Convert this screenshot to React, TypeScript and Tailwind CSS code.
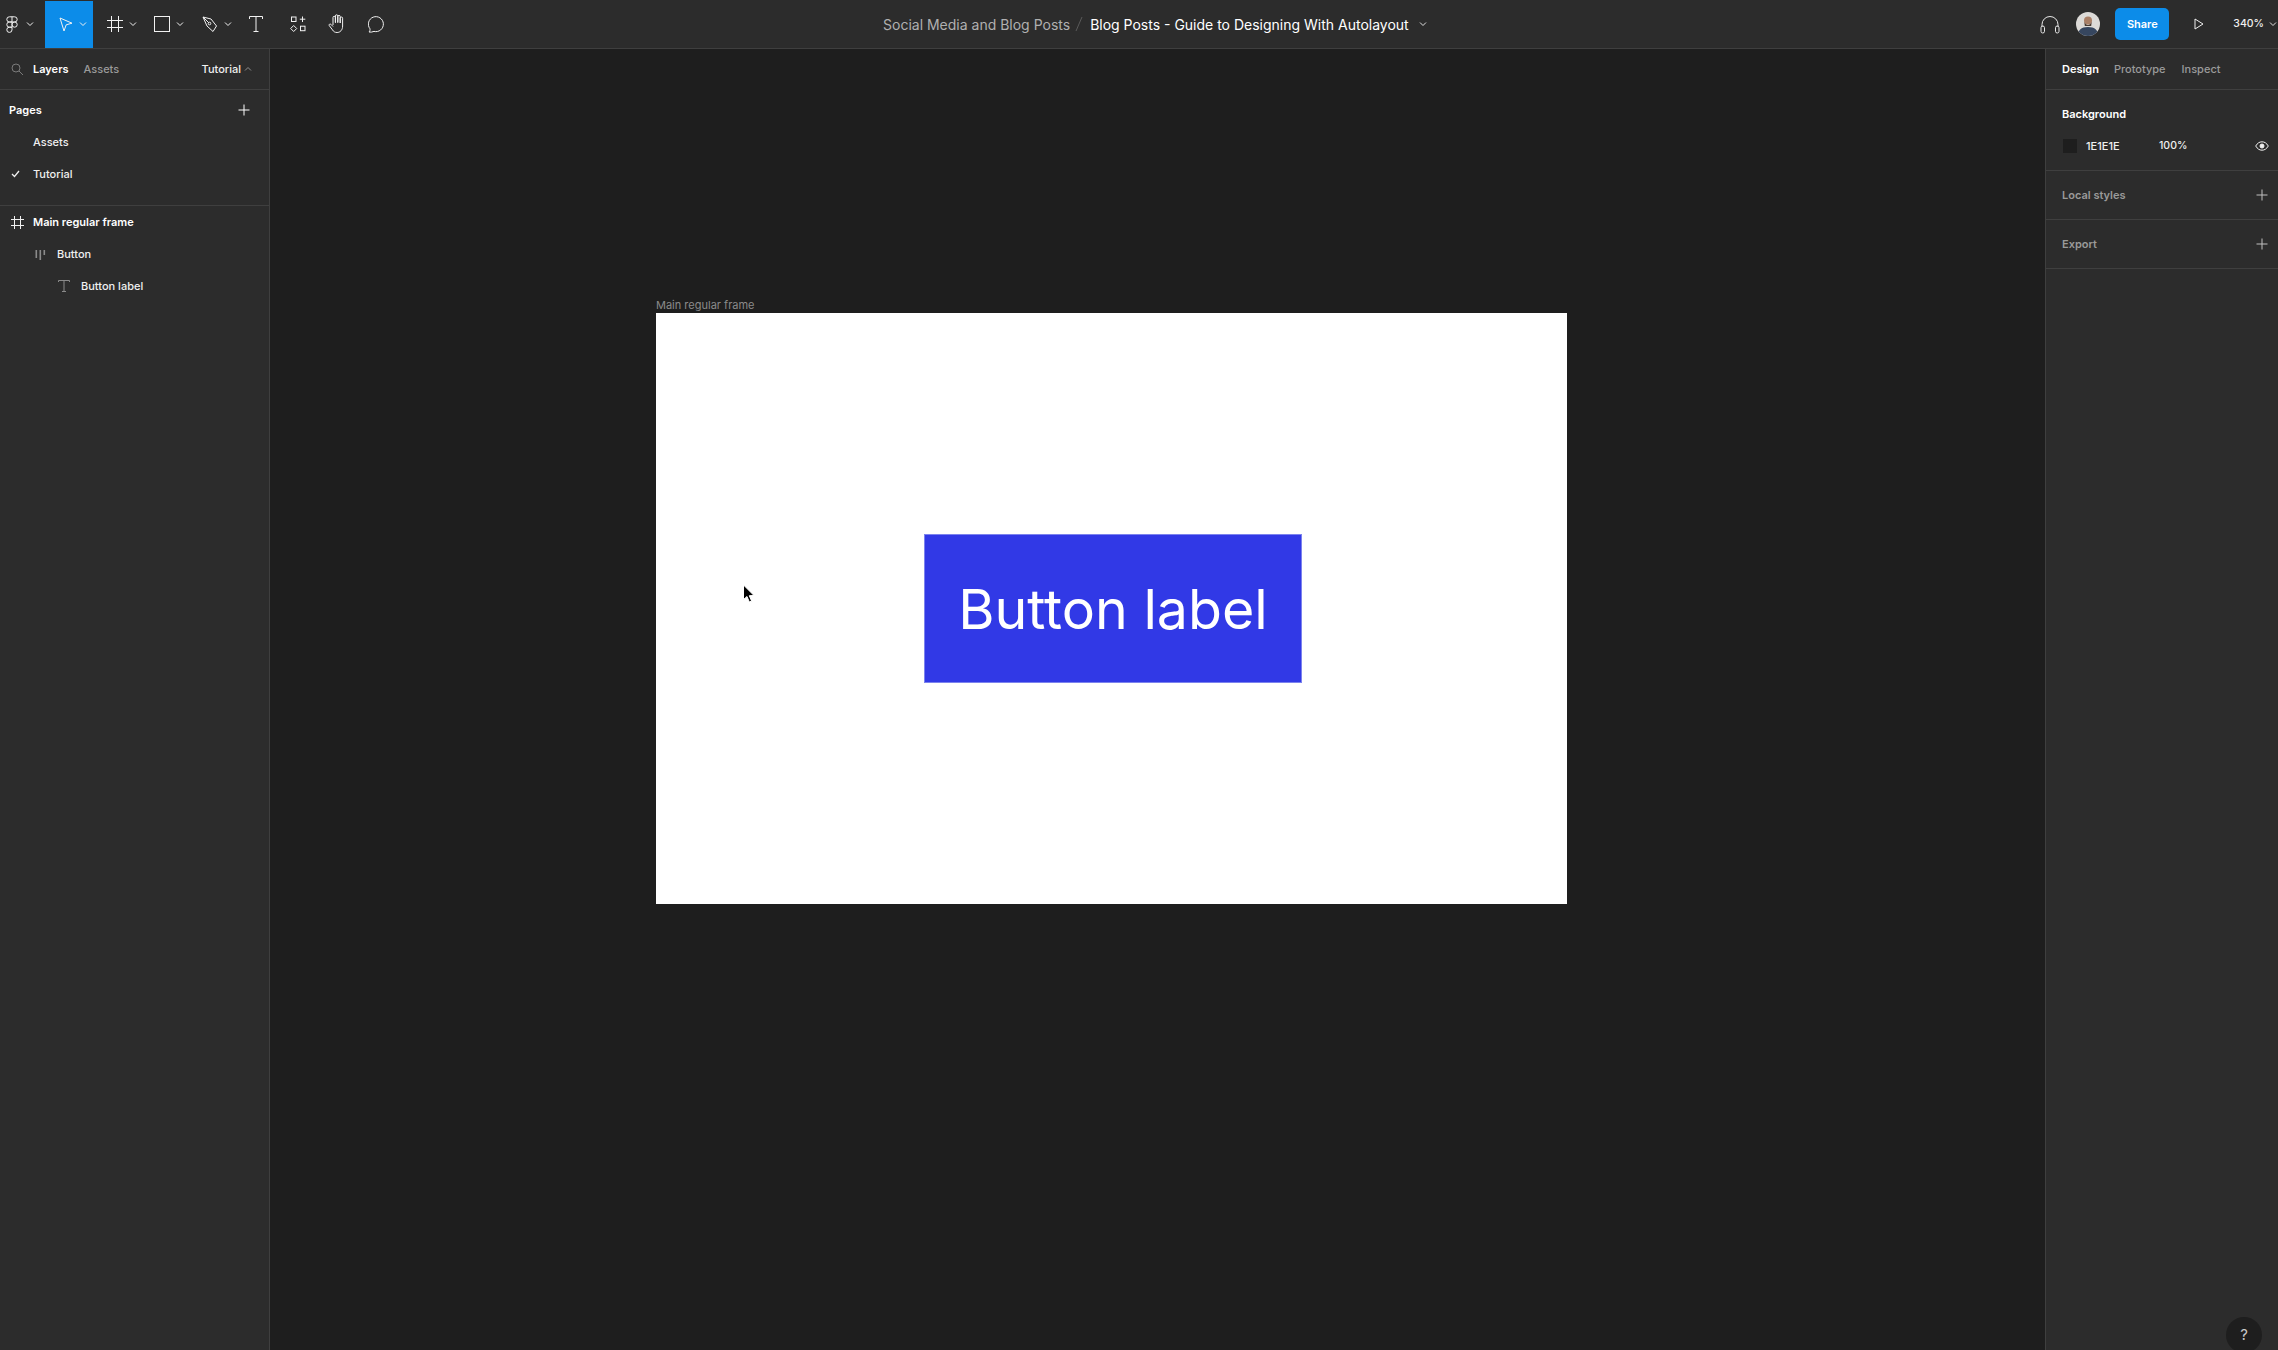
import React from "react";

const font = { fontFamily: "Inter, 'Liberation Sans', sans-serif" };

function Chev({ className = "", up = false }: { className?: string; up?: boolean }) {
  return (
    <svg width="8" height="6" viewBox="0 0 8 6" fill="none" className={className}>
      <path d={up ? "M1 4.5 L4 1.5 L7 4.5" : "M1 1.5 L4 4.5 L7 1.5"} stroke="currentColor" strokeWidth="1" />
    </svg>
  );
}

function Plus({ className = "" }: { className?: string }) {
  return (
    <svg width="12" height="12" viewBox="0 0 12 12" fill="none" className={className}>
      <path d="M6 0.5V11.5M0.5 6H11.5" stroke="currentColor" strokeWidth="1" />
    </svg>
  );
}

function Tool({ children, chevron = true, active = false, w = "w-[48px]", pl = "pl-[13px]" }: { children: React.ReactNode; chevron?: boolean; active?: boolean; w?: string; pl?: string }) {
  return (
    <div className={`${w} ${pl} h-[47px] flex items-center shrink-0 text-[#f2f2f2] ${active ? "bg-[#0c8ce9]" : ""}`}>
      <div className="w-[18px] flex justify-center shrink-0">{children}</div>
      {chevron && <Chev className="ml-[5px]" />}
    </div>
  );
}

export default function App() {
  return (
    <div className="w-[2278px] h-[1350px] bg-[#1e1e1e] flex flex-col overflow-hidden antialiased" style={font}>
      <header className="h-[49px] shrink-0 bg-[#2c2c2c] border-b border-b-[#3f3f3f] flex items-center text-[14px]">
        <Tool w="w-[45px]" pl="pl-[3px]">
          <svg width="12" height="17" viewBox="0 0 12 17" fill="none" stroke="currentColor" strokeWidth="1">
            <path d="M6 .8H3.4a2.6 2.6 0 0 0 0 5.2H6V.8ZM6 .8h2.600a2.600 2.600 0 0 1 0 5.200H6M6 6H3.400a2.600 2.600 0 0 0 0 5.200H6V6ZM6 11.200H3.400A2.600 2.600 0 1 0 6 13.800v-2.600Z" />
            <circle cx="8.6" cy="8.6" r="2.6" />
          </svg>
        </Tool>
        <Tool active pl="pl-[11px]">
          <svg width="14" height="15" viewBox="0 0 14 15" fill="none" stroke="currentColor" strokeWidth="1" className="ml-[2px]">
            <path d="M1 1 L13 6.2 L7.2 7.8 L5 14 Z" />
          </svg>
        </Tool>
        <Tool pl="pl-[13px]">
          <svg width="16" height="16" viewBox="0 0 16 16" fill="none" stroke="currentColor" strokeWidth="1">
            <path d="M0 4.5H16M0 11.5H16M4.5 0V16M11.5 0V16" />
          </svg>
        </Tool>
        <Tool pl="pl-[12px]">
          <svg width="16" height="16" viewBox="0 0 16 16" fill="none" stroke="currentColor" strokeWidth="1">
            <rect x=".5" y=".5" width="15" height="15" />
          </svg>
        </Tool>
        <Tool pl="pl-[12px]">
          <svg width="16" height="17" viewBox="0 0 16 17" fill="none" stroke="currentColor" strokeWidth="1">
            <path d="M1 1 L9 3 L14.5 10 L11 15.5 L5 10 Z" />
            <circle cx="7.5" cy="7.5" r="1.3" />
            <path d="M1 1 L6.8 6.8" />
          </svg>
        </Tool>
        <Tool chevron={false} w="w-[40px]" pl="pl-[10px]">
          <svg width="14" height="16" viewBox="0 0 14 16" fill="none" stroke="currentColor" strokeWidth="1">
            <path d="M.5 3V.5H13.5V3M7 .5V15.5M4.5 15.5H9.5" />
          </svg>
        </Tool>
        <Tool chevron={false} w="w-[40px]" pl="pl-[12px]">
          <svg width="16" height="16" viewBox="0 0 16 16" fill="none" stroke="currentColor" strokeWidth="1">
            <rect x="1.5" y="1" width="4.5" height="4.5" />
            <path d="M12.5 .5V6M9.8 3.2H15.3" />
            <path d="M3.7 9.5L6.7 12.5L3.7 15.5L.7 12.5Z" />
            <rect x="10.5" y="10.2" width="4.5" height="4.5" />
          </svg>
        </Tool>
        <Tool chevron={false} w="w-[40px]" pl="pl-[11px]">
          <svg width="18" height="20" viewBox="0 0 18 20" fill="none" stroke="currentColor" strokeWidth="1">
            <path d="M5 11V3.5a1.2 1.2 0 0 1 2.4 0V9M7.4 8V2a1.2 1.2 0 0 1 2.4 0V9M9.8 8V2.6a1.2 1.2 0 0 1 2.4 0V9M12.2 9V4.2a1.2 1.2 0 0 1 2.4 0V12c0 4-2.4 6.5-5.5 6.5-2.4 0-3.6-1-4.6-2.6L1.2 11.5c-.6-1 .8-2 1.7-1.2L5 12.5" />
          </svg>
        </Tool>
        <Tool chevron={false} w="w-[40px]" pl="pl-[11px]">
          <svg width="18" height="17" viewBox="0 0 18 17" fill="none" stroke="currentColor" strokeWidth="1">
            <path d="M1 16c.9-1 1.2-2 1-3.2A7.5 7.5 0 1 1 6 15.4c-1.6.7-3.2.9-5 .6Z" />
          </svg>
        </Tool>

        <div className="ml-[486px] flex items-center whitespace-nowrap">
          <span className="text-[#b0b0b0]">Social Media and Blog Posts</span>
          <svg width="8" height="16" viewBox="0 0 8 16" className="mx-[5px]" fill="none" stroke="#5a5a5a" strokeWidth="1">
            <path d="M7 1 L1 15" />
          </svg>
          <span className="text-white ml-[2px]">Blog Posts - Guide to Designing With Autolayout</span>
          <Chev className="ml-[10px] text-[#e0e0e0]" />
        </div>

        <div className="ml-auto flex items-center h-full shrink-0">
          <svg width="20" height="19" viewBox="0 0 20 19" fill="none" stroke="#e8e8e8" strokeWidth="1">
            <path d="M2 12V9.5a8 8 0 0 1 16 0V12" />
            <rect x="1" y="11" width="3.5" height="7" rx="1.7" />
            <rect x="15.5" y="11" width="3.5" height="7" rx="1.7" />
          </svg>
          <svg width="24" height="24" viewBox="0 0 24 24" className="ml-[16px]">
            <defs>
              <clipPath id="av"><circle cx="12" cy="12" r="12" /></clipPath>
            </defs>
            <g clipPath="url(#av)">
              <rect width="24" height="24" fill="#dcdad7" />
              <path d="M2 24c0-6 3-9 10-9s10 3 10 9Z" fill="#36465f" />
              <circle cx="12" cy="8.500" r="4" fill="#a97f66" />
              <path d="M8.300 9.500c1 4.500 6.400 4.500 7.400 0l-.5 4.500h-6.400Z" fill="#4a3a30" />
            </g>
          </svg>
          <div className="ml-[15px] w-[54px] h-[32px] rounded-[5px] bg-[#0c8ce9] text-white text-[11px] font-semibold flex items-center justify-center">Share</div>
          <svg width="10" height="12" viewBox="0 0 10 12" className="ml-[25px]" fill="none" stroke="#f0f0f0" strokeWidth="1">
            <path d="M1 1 L9 6 L1 11 Z" />
          </svg>
          <span className="ml-[29px] text-[10.5px] font-medium text-[#f0f0f0]">340%</span>
          <Chev className="ml-[5px] mr-[1px] text-[#e0e0e0]" />
        </div>
      </header>

      <div className="flex-1 flex min-h-0">
        <aside className="w-[270px] shrink-0 bg-[#2c2c2c] border-r border-r-[#3f3f3f] flex flex-col text-[11px] text-[#f0f0f0]">
          <div className="h-[41px] shrink-0 border-b border-b-[#3f3f3f] flex items-center">
            <svg width="13" height="13" viewBox="0 0 13 13" className="ml-[11px]" fill="none" stroke="#7a7a7a" strokeWidth="1">
              <circle cx="5" cy="5" r="4" />
              <path d="M8 8 L12 12" />
            </svg>
            <span className="ml-[9px] font-semibold text-white">Layers</span>
            <span className="ml-[15px] font-medium text-[#9a9a9a]">Assets</span>
            <span className="ml-auto font-medium">Tutorial</span>
            <Chev up className="ml-[3px] mr-[17px] text-[#8f8f8f]" />
          </div>

          <div className="h-[116px] shrink-0 border-b border-b-[#3f3f3f] flex flex-col">
            <div className="h-[36px] flex items-center justify-between pl-[9px] pr-[19px] pt-[4px]">
              <span className="font-semibold text-white">Pages</span>
              <Plus className="text-white" />
            </div>
            <div className="h-[32px] flex items-center pl-[33px] font-medium">Assets</div>
            <div className="h-[32px] flex items-center font-medium">
              <svg width="9" height="8" viewBox="0 0 9 8" className="ml-[11px] mr-[13px]" fill="none" stroke="#f0f0f0" strokeWidth="1.3">
                <path d="M1 4 L3.5 6.5 L8 1" />
              </svg>
              Tutorial
            </div>
          </div>

          <div className="h-[32px] flex items-center font-semibold text-white">
            <svg width="13" height="13" viewBox="0 0 13 13" className="ml-[11px] mr-[9px]" fill="none" stroke="#f0f0f0" strokeWidth="1">
              <path d="M0 3.5H13M0 9.5H13M3.5 0V13M9.5 0V13" />
            </svg>
            Main regular frame
          </div>
          <div className="h-[32px] flex items-center font-medium">
            <svg width="11" height="11" viewBox="0 0 11 11" className="ml-[35px] mr-[11px]" fill="#8a8a8a">
              <rect x="0.5" y="1" width="1.6" height="8" />
              <rect x="4.5" y="1" width="1.6" height="10" />
              <rect x="8.5" y="1" width="1.6" height="5" />
            </svg>
            Button
          </div>
          <div className="h-[32px] flex items-center font-medium">
            <svg width="12" height="12" viewBox="0 0 12 12" className="ml-[58px] mr-[11px]" fill="none" stroke="#8a8a8a" strokeWidth="1">
              <path d="M.5 2V.5H11.5V2M6 .5V11.5M4 11.5H8" />
            </svg>
            Button label
          </div>
        </aside>

        <main className="flex-1 relative">
          <div className="absolute left-[386px] top-[249px] text-[11px] leading-[14px] text-[#8a8a8a] whitespace-nowrap">Main regular frame</div>
          <div className="absolute left-[386px] top-[264px] w-[911px] h-[591px] bg-white flex items-center justify-center">
            <div className="ml-[3px] w-[378px] h-[149px] pt-[1px] bg-[#3139e6] border border-[#7c83ee] text-white text-[55.5px] flex items-center justify-center">Button label</div>
          </div>
          <svg width="13" height="20" viewBox="0 0 13 20" className="absolute left-[472px] top-[535px]">
            <path d="M1.5 1 L1.5 15.5 L5 12.5 L7.3 18 L9.6 17 L7.3 11.7 L12 11.5 Z" fill="#000" stroke="#fff" strokeWidth="1" />
          </svg>
        </main>

        <aside className="w-[233px] shrink-0 bg-[#2c2c2c] border-l border-l-[#3f3f3f] flex flex-col text-[11px] text-[#f0f0f0] relative">
          <div className="h-[41px] shrink-0 border-b border-b-[#3f3f3f] flex items-center pl-[16px]">
            <span className="font-semibold text-white">Design</span>
            <span className="ml-[15px] font-medium text-[#9a9a9a]">Prototype</span>
            <span className="ml-[16px] font-medium text-[#9a9a9a]">Inspect</span>
          </div>
          <div className="h-[81px] shrink-0 border-b border-b-[#3f3f3f] flex flex-col pl-[16px]">
            <div className="h-[48px] flex items-center font-semibold text-white">Background</div>
            <div className="flex items-center h-[16px] font-medium">
              <div className="w-[14px] h-[14px] ml-[1px] bg-[#1e1e1e]" />
              <span className="ml-[9px] w-[73px]">1E1E1E</span>
              <span className="text-[10.5px]">100%</span>
              <svg width="14" height="10" viewBox="0 0 14 10" className="ml-auto mr-[9px]" fill="none" stroke="#f0f0f0" strokeWidth="1">
                <path d="M.7 5C2.5 2 4.5.8 7 .8S11.5 2 13.3 5C11.5 8 9.5 9.2 7 9.2S2.5 8 .7 5Z" />
                <circle cx="7" cy="5" r="2" fill="#f0f0f0" />
              </svg>
            </div>
          </div>
          <div className="h-[49px] shrink-0 border-b border-b-[#3f3f3f] flex items-center justify-between pl-[16px] pr-[10px] font-semibold text-[#9a9a9a]">
            <span>Local styles</span>
            <Plus className="text-[#c0c0c0]" />
          </div>
          <div className="h-[49px] shrink-0 border-b border-b-[#3f3f3f] flex items-center justify-between pl-[16px] pr-[10px] font-semibold text-[#9a9a9a]">
            <span>Export</span>
            <Plus className="text-[#c0c0c0]" />
          </div>
          <div className="absolute right-[16px] -bottom-[3px] w-[36px] h-[36px] rounded-full bg-[#1e1e1e] flex items-center justify-center text-[#c8c8c8] text-[15px]">?</div>
        </aside>
      </div>
    </div>
  );
}
